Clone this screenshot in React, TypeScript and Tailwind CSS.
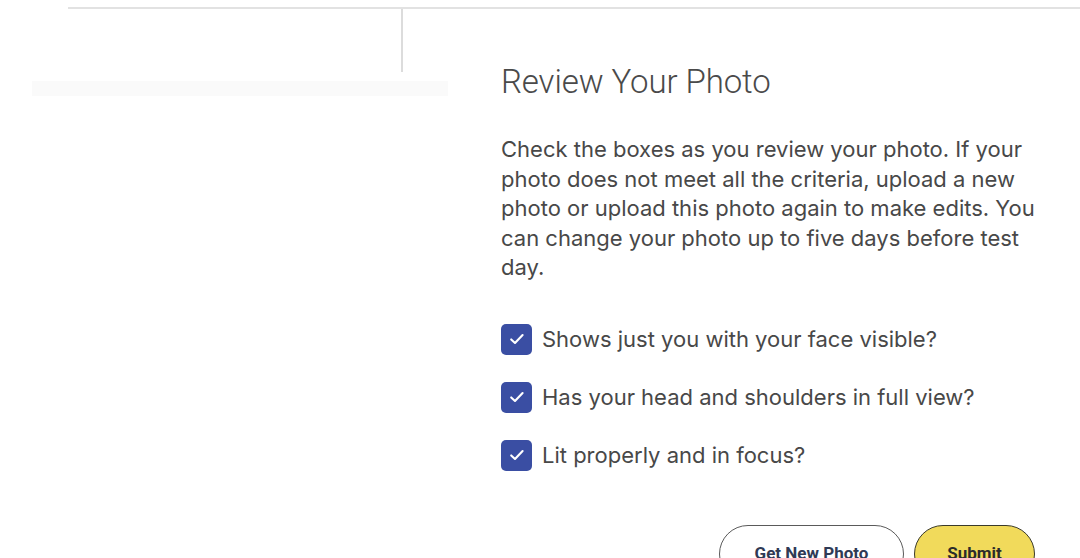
import { useState } from "react";

const criteria = [
  "Shows just you with your face visible?",
  "Has your head and shoulders in full view?",
  "Lit properly and in focus?",
];

function CheckBox({ checked, onToggle }: { checked: boolean; onToggle: () => void }) {
  return (
    <button
      type="button"
      onClick={onToggle}
      className={`flex h-[31px] w-[31px] shrink-0 items-center justify-center rounded-[5px] ${
        checked ? "bg-[#3a4ea3]" : "border-2 border-[#3a4ea3] bg-white"
      }`}
    >
      {checked && (
        <svg width="20" height="20" viewBox="0 0 20 20" fill="none">
          <path d="M4.2 10.4 L8 14 L15.6 6" stroke="#fff" strokeWidth="2.1" strokeLinecap="round" strokeLinejoin="round" />
        </svg>
      )}
    </button>
  );
}

export default function App() {
  const [checks, setChecks] = useState([true, true, true]);

  return (
    <div className="min-h-[558px] overflow-hidden bg-white pt-[7px] font-['Roboto',sans-serif] text-[#454545]">
      <div className="ml-[68px] border-t-2 border-[#e2e2e2]">
        <div className="flex">
          {/* left rail */}
          <div className="w-[335px] shrink-0">
            <div className="h-[63px] border-r-2 border-[#dcdcdc]" />
            <div className="-ml-[36px] mt-[9px] h-[15px] w-[416px] bg-[#fafafa]" />
          </div>

          {/* review panel */}
          <div className="w-[650px] pl-[98px] pt-[53px]">
            <h1 className="text-[33px] font-light leading-[40px] tracking-[-0.1px] text-[#4a4a4a]">Review Your Photo</h1>

            <p className="mt-[33px] w-[560px] font-['Inter',sans-serif] text-[22px] leading-[29.5px] text-[#484848]">
              Check the boxes as you review your photo. If your photo does not meet all the criteria, upload a new photo or
              upload this photo again to make edits. You can change your photo up to five days before test day.
            </p>

            <ul className="mt-[41px] flex flex-col gap-[27px]">
              {criteria.map((label, i) => (
                <li key={label} className="flex items-center gap-[10px]">
                  <CheckBox
                    checked={checks[i]}
                    onToggle={() => setChecks((c) => c.map((v, j) => (j === i ? !v : v)))}
                  />
                  <span className="font-['Inter',sans-serif] text-[22px] leading-[31px] text-[#484848]">{label}</span>
                </li>
              ))}
            </ul>

            <div className="mt-[54px] flex justify-end gap-[10px] pr-[18px]">
              <button className="h-[58px] w-[185px] rounded-full border-[1.5px] border-[#5a5a5a] bg-white text-[17px] font-bold text-[#2f3a55]">
                Get New Photo
              </button>
              <button className="h-[58px] w-[121px] rounded-full border-[1.5px] border-[#3a3a2a] bg-[#f1da5b] text-[17px] font-bold text-[#2b2b2b]">
                Submit
              </button>
            </div>
          </div>
        </div>
      </div>
    </div>
  );
}
